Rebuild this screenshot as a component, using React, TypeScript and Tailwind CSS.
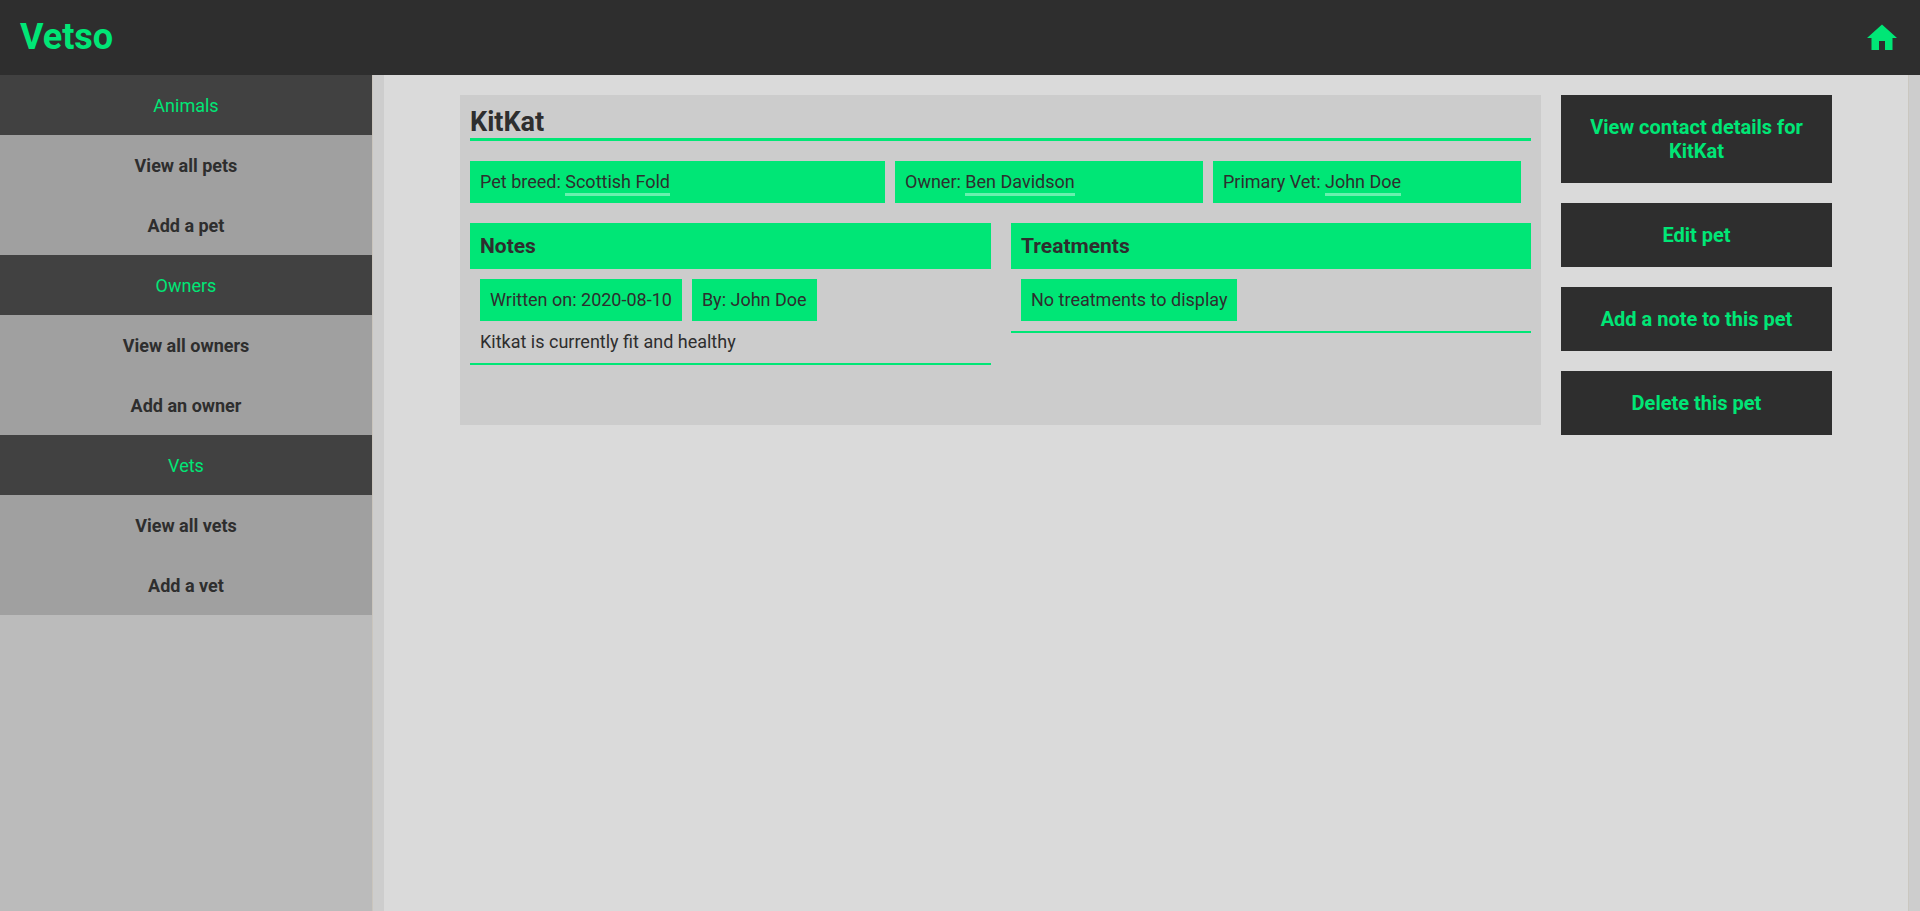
import { MdHome } from "react-icons/md";

const menu = [
  { title: "Animals", links: ["View all pets", "Add a pet"] },
  { title: "Owners", links: ["View all owners", "Add an owner"] },
  { title: "Vets", links: ["View all vets", "Add a vet"] },
];

const facts = [
  { label: "Pet breed:", value: "Scottish Fold", width: "w-[415px]" },
  { label: "Owner:", value: "Ben Davidson", width: "w-[308px]" },
  { label: "Primary Vet:", value: "John Doe", width: "w-[308px]" },
];

const actions = [
  "View contact details for KitKat",
  "Edit pet",
  "Add a note to this pet",
  "Delete this pet",
];

function Tag({ children }: { children: React.ReactNode }) {
  return <span className="h-[42px] bg-[#00e676] p-2.5 leading-[22px]">{children}</span>;
}

export default function App() {
  return (
    <div className="flex h-screen flex-col overflow-hidden bg-[#cdcdcd] font-['Roboto',sans-serif] text-lg text-[#2e2e2e]">
      <header className="flex h-[75px] shrink-0 items-center justify-between bg-[#2e2e2e] px-5 text-[#00e676]">
        <h1 className="pb-0.5 text-4xl font-bold">Vetso</h1>
        <MdHome className="size-9" />
      </header>
      <div className="flex flex-1">
        <nav className="w-[373px] shrink-0 border-r border-[#cac5bd] bg-[#bbbbbb] text-center leading-[22px]">
          {menu.map((group) => (
            <section key={group.title}>
              <h2 className="h-[60px] bg-[#414141] pt-5 text-[#00e676]">{group.title}</h2>
              {group.links.map((link) => (
                <a key={link} className="block h-[60px] bg-[#a0a0a0] pt-5 font-bold">
                  {link}
                </a>
              ))}
            </section>
          ))}
        </nav>
        <main className="mr-[11px] ml-[11px] flex flex-1 items-start gap-5 border-r border-[#cac7c0] bg-[#dadada] pt-5 pl-[76px]">
          <article className="h-[330px] w-[1081px] bg-[#cccccc] p-2.5">
            <h2 className="h-9 border-b-3 border-[#00e676] pt-px text-[27px] leading-[33px] font-bold">KitKat</h2>
            <div className="mt-5 flex gap-2.5">
              {facts.map((fact) => (
                <p key={fact.label} className={`h-[42px] bg-[#00e676] p-2.5 leading-[22px] ${fact.width}`}>
                  {fact.label} <a className="border-b-3 border-[#69f0ae] pb-px">{fact.value}</a>
                </p>
              ))}
            </div>
            <div className="mt-5 grid grid-cols-[521px_520px] items-start gap-5">
              <section className="border-b-2 border-[#00e676]">
                <h3 className="h-[46px] bg-[#00e676] px-2.5 text-[21px] leading-[46px] font-bold">Notes</h3>
                <div className="p-2.5">
                  <div className="flex gap-2.5">
                    <Tag>Written on: 2020-08-10</Tag>
                    <Tag>By: John Doe</Tag>
                  </div>
                  <p className="mt-2.5 leading-[22px]">Kitkat is currently fit and healthy</p>
                </div>
              </section>
              <section className="border-b-2 border-[#00e676]">
                <h3 className="h-[46px] bg-[#00e676] px-2.5 text-[21px] leading-[46px] font-bold">Treatments</h3>
                <div className="flex p-2.5">
                  <Tag>No treatments to display</Tag>
                </div>
              </section>
            </div>
          </article>
          <aside className="flex w-[271px] flex-col gap-5">
            {actions.map((action) => (
              <button key={action} className="bg-[#2e2e2e] p-5 text-xl leading-6 font-bold text-[#00e676]">
                {action}
              </button>
            ))}
          </aside>
        </main>
      </div>
    </div>
  );
}
